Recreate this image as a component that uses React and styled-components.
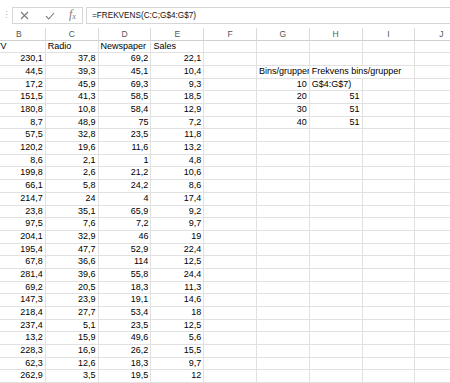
import React from "react";
import styled, { createGlobalStyle } from "styled-components";

const GlobalStyle = createGlobalStyle`
  html, body {
    margin: 0;
    padding: 0;
    background: #ffffff;
    overflow: hidden;
  }
  body {
    font-family: "Liberation Sans", Arial, sans-serif;
  }
`;

const COLS = ["B", "C", "D", "E", "F", "G", "H", "I", "J"];

const data = [
  ["230,1", "37,8", "69,2", "22,1"],
  ["44,5", "39,3", "45,1", "10,4"],
  ["17,2", "45,9", "69,3", "9,3"],
  ["151,5", "41,3", "58,5", "18,5"],
  ["180,8", "10,8", "58,4", "12,9"],
  ["8,7", "48,9", "75", "7,2"],
  ["57,5", "32,8", "23,5", "11,8"],
  ["120,2", "19,6", "11,6", "13,2"],
  ["8,6", "2,1", "1", "4,8"],
  ["199,8", "2,6", "21,2", "10,6"],
  ["66,1", "5,8", "24,2", "8,6"],
  ["214,7", "24", "4", "17,4"],
  ["23,8", "35,1", "65,9", "9,2"],
  ["97,5", "7,6", "7,2", "9,7"],
  ["204,1", "32,9", "46", "19"],
  ["195,4", "47,7", "52,9", "22,4"],
  ["67,8", "36,6", "114", "12,5"],
  ["281,4", "39,6", "55,8", "24,4"],
  ["69,2", "20,5", "18,3", "11,3"],
  ["147,3", "23,9", "19,1", "14,6"],
  ["218,4", "27,7", "53,4", "18"],
  ["237,4", "5,1", "23,5", "12,5"],
  ["13,2", "15,9", "49,6", "5,6"],
  ["228,3", "16,9", "26,2", "15,5"],
  ["62,3", "12,6", "18,3", "9,7"],
  ["262,9", "3,5", "19,5", "12"],
];

// cells in G/H keyed by data row index (0 = first number row)
const side = {
  1: [{ text: "Bins/grupper", align: "left" }, { text: "Frekvens bins/grupper", align: "left", span: 2 }],
  2: [{ text: "10", align: "right" }, { text: "G$4:G$7)", align: "left" }],
  3: [{ text: "20", align: "right" }, { text: "51", align: "right" }],
  4: [{ text: "30", align: "right" }, { text: "51", align: "right" }],
  5: [{ text: "40", align: "right" }, { text: "51", align: "right" }],
};

const App = () => {
  const rows = [
    ["TV", "Radio", "Newspaper", "Sales"].map((t) => ({ text: t, align: "left" })),
    ...data.map((r) => r.map((t) => ({ text: t, align: "right" }))),
  ];

  return (
    <Page>
      <GlobalStyle />
      <FormulaBar>
        <Grip>⋮</Grip>
        <ButtonBox>
          <IconButton>
            <svg width="9" height="9" viewBox="0 0 9 9">
              <path d="M1 1 L8 8 M8 1 L1 8" stroke="#7a7a7a" strokeWidth="1.1" fill="none" />
            </svg>
          </IconButton>
          <IconButton>
            <svg width="10" height="8" viewBox="0 0 10 8">
              <path d="M1 4.2 L3.7 7 L9 1" stroke="#7a7a7a" strokeWidth="1.1" fill="none" />
            </svg>
          </IconButton>
          <FxLabel>
            f<sub>x</sub>
          </FxLabel>
        </ButtonBox>
        <FormulaInput>=FREKVENS(C:C;G$4:G$7)</FormulaInput>
      </FormulaBar>

      <Sheet>
        {COLS.map((c) => (
          <HeaderCell key={c}>{c}</HeaderCell>
        ))}
        {rows.map((row, ri) => {
          const extra = side[ri - 1];
          const cells = [...row, { text: "", align: "left" }];
          if (extra) {
            cells.push(extra[0], extra[1]);
            if (!extra[1].span) cells.push({ text: "" });
          } else {
            cells.push({ text: "" }, { text: "" }, { text: "" });
          }
          cells.push({ text: "" });
          return cells.map((cell, ci) => (
            <Cell key={`${ri}-${ci}`} $align={cell.align} $span={cell.span}>
              {cell.text}
            </Cell>
          ));
        })}
      </Sheet>
    </Page>
  );
};

export default App;

const Page = styled.div`
  width: 450px;
  height: 383px;
  overflow: hidden;
  background: #ffffff;
`;

const FormulaBar = styled.div`
  display: flex;
  align-items: flex-start;
  height: 28px;
  padding-top: 7px;
  box-sizing: border-box;
`;

const Grip = styled.div`
  width: 12px;
  height: 16px;
  line-height: 16px;
  text-align: center;
  font-size: 9px;
  color: #b0b0b0;
`;

const ButtonBox = styled.div`
  width: 71px;
  height: 17px;
  box-sizing: border-box;
  border: 1px solid #d6d6d6;
  display: flex;
  align-items: center;
  padding-left: 7px;
`;

const IconButton = styled.div`
  width: 25px;
  height: 15px;
  display: flex;
  align-items: center;
  justify-content: flex-start;
`;

const FxLabel = styled.div`
  font-family: "Liberation Serif", "Times New Roman", serif;
  font-style: italic;
  font-size: 12px;
  color: #7a7a7a;
  line-height: 15px;
  margin-left: -1px;

  sub {
    font-size: 8px;
    vertical-align: -1px;
  }
`;

const FormulaInput = styled.div`
  flex: 1;
  margin-left: 3px;
  height: 17px;
  box-sizing: border-box;
  border: 1px solid #d6d6d6;
  border-right: none;
  padding-left: 5px;
  font-size: 8.2px;
  line-height: 15px;
  color: #111111;
  white-space: nowrap;
`;

const Sheet = styled.div`
  display: grid;
  grid-template-columns: repeat(9, 52.8px);
  grid-template-rows: 12.6px;
  grid-auto-rows: 12.7px;
  margin-left: -7px;
`;

const HeaderCell = styled.div`
  box-sizing: border-box;
  border-right: 1px solid #dadada;
  border-bottom: 1px solid #d0d0d0;
  font-size: 8.5px;
  color: #555555;
  text-align: center;
  line-height: 12px;
`;

const Cell = styled.div`
  box-sizing: border-box;
  grid-column: ${(p) => (p.$span ? `span ${p.$span}` : "auto")};
  border-right: 1px solid #e1e1e1;
  border-bottom: 1px solid #e1e1e1;
  padding: 0 2px;
  font-size: 9px;
  line-height: 11px;
  color: #000000;
  text-align: ${(p) => p.$align};
  white-space: nowrap;
  overflow: hidden;
`;
